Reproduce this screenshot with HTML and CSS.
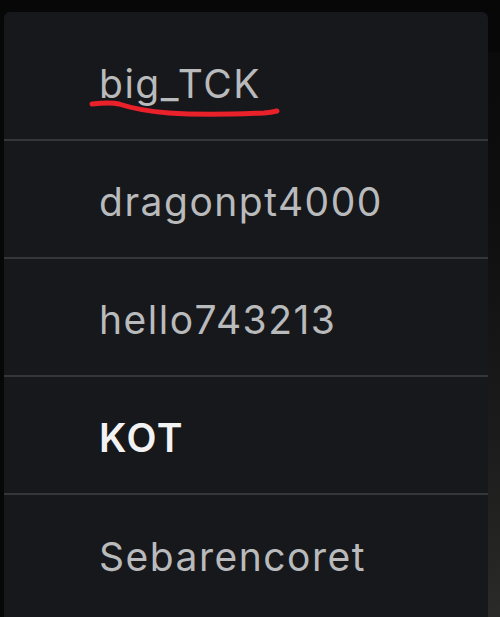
FILE: index.html
```html
<!DOCTYPE html>
<html>
<head>
<meta charset="utf-8">
<link rel="stylesheet" href="styles.css">
</head>
<body>
<div class="screen">
  <div class="panel">
    <ul class="list">
      <li class="item first"><span class="name">big_TCK</span></li>
      <li class="item"><span class="name">dragonpt4000</span></li>
      <li class="item"><span class="name">hello743213</span></li>
      <li class="item"><span class="name bold">KOT</span></li>
      <li class="item last"><span class="name">Sebarencoret</span></li>
    </ul>
  </div>
  <div class="edge"></div>
  <svg class="scribble" width="200" height="24" viewBox="0 0 200 24">
    <path d="M3 5 C 12 4, 22 3, 30 5 C 42 9, 55 12, 80 14 C 110 16, 150 15, 175 14 C 182 13.5, 186 12.5, 188 12" fill="none" stroke="#e8212b" stroke-width="5" stroke-linecap="round"/>
  </svg>
</div>
</body>
</html>
```
FILE: styles.css
```css
html, body {
  margin: 0;
  padding: 0;
  background: #070708;
}
.screen {
  position: relative;
  width: 500px;
  height: 617px;
  overflow: hidden;
  display: flex;
  padding-top: 12px;
  box-sizing: border-box;
  background: #070708;
}
.panel {
  margin-left: 4px;
  width: 484px;
  background: #17181b;
  border-radius: 6px 6px 0 0;
  padding-top: 11px;
  box-sizing: border-box;
}
.edge {
  flex: 1;
  background: linear-gradient(to bottom, #0a0a0b 0%, #0f0f10 30%, #1c1c1c 70%, #2a2a28 100%);
  margin-top: 40px;
}
.list {
  list-style: none;
  margin: 0;
  padding: 0;
}
.item {
  height: 118px;
  display: flex;
  align-items: center;
  padding-left: 95px;
  border-bottom: 2px solid #35363a;
  box-sizing: border-box;
}
.item.last {
  border-bottom: none;
}
.name {
  font-family: Inter, "DejaVu Sans", sans-serif;
  font-size: 39px;
  letter-spacing: 1.5px;
  color: #b9babc;
  line-height: 1;
  padding-top: 4px;
}
.name.bold {
  font-weight: 600;
  color: #f2f2f2;
}
.scribble {
  position: absolute;
  left: 89px;
  top: 99px;
}
```
